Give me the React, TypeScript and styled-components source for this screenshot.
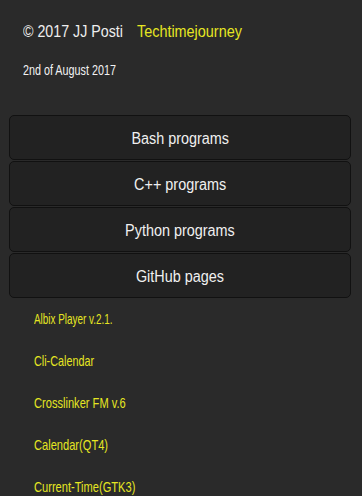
import React from "react";
import styled, { createGlobalStyle } from "styled-components";

const GlobalStyle = createGlobalStyle`
  html, body {
    margin: 0;
    padding: 0;
    background: #2a2a2a;
  }
  body {
    font-family: "Liberation Sans", Arial, sans-serif;
    color: #eeeeee;
  }
`;

const Page = styled.div`
  width: 362px;
  min-height: 496px;
  overflow: hidden;
`;

// the reference font is a narrow one; squeeze Liberation Sans to its width
const Squeeze = styled.span<{ $sx: number; $origin?: string }>`
  display: inline-block;
  white-space: nowrap;
  transform: scaleX(${(p) => p.$sx});
  transform-origin: ${(p) => p.$origin || "left"} center;
`;

const Header = styled.header`
  height: 115px;
  padding: 22px 0 0 23px;
  box-sizing: border-box;
`;

const TitleRow = styled.div`
  display: flex;
  align-items: baseline;
  gap: 2px;
  font-size: 16px;
  line-height: 20px;
`;

const Copyright = styled.span`
  color: #eeeeee;
`;

const SiteName = styled.a`
  color: #e6e622;
  text-decoration: none;
`;

const DateLine = styled.p`
  margin: 20px 0 0;
  font-size: 14px;
  line-height: 16px;
  color: #f2f2f2;
`;

const Menu = styled.nav`
  display: flex;
  flex-direction: column;
  gap: 1px;
  margin: 0 11px 0 9px;
`;

const MenuButton = styled.button`
  height: 45px;
  padding: 3px 0 0;
  background: #222222;
  border: 1px solid #111111;
  border-radius: 5px;
  color: #f0f0f0;
  font-family: inherit;
  font-size: 16px;
  cursor: pointer;
`;

const LinkList = styled.ul`
  list-style: none;
  margin: 0;
  padding: 13px 0 0 34px;
  display: flex;
  flex-direction: column;
  gap: 26px;
`;

const ProgramLink = styled.a`
  display: block;
  color: #e6e622;
  font-size: 15px;
  line-height: 16px;
  text-decoration: none;
`;

const sections = ["Bash programs", "C++ programs", "Python programs", "GitHub pages"];

const programs = [
  { name: "Albix Player v.2.1.", sx: 0.66 },
  { name: "Cli-Calendar", sx: 0.72 },
  { name: "Crosslinker FM v.6", sx: 0.74 },
  { name: "Calendar(QT4)", sx: 0.74 },
  { name: "Current-Time(GTK3)", sx: 0.74 },
];

export default function App() {
  return (
    <Page>
      <GlobalStyle />
      <Header>
        <TitleRow>
          <Copyright>
            <Squeeze $sx={0.89}>© 2017 JJ Posti</Squeeze>
          </Copyright>
          <SiteName href="#">
            <Squeeze $sx={0.9}>Techtimejourney</Squeeze>
          </SiteName>
        </TitleRow>
        <DateLine>
          <Squeeze $sx={0.77}>2nd of August 2017</Squeeze>
        </DateLine>
      </Header>
      <Menu>
        {sections.map((s) => (
          <MenuButton key={s}>
            <Squeeze $sx={0.9} $origin="center">
              {s}
            </Squeeze>
          </MenuButton>
        ))}
      </Menu>
      <LinkList>
        {programs.map((p) => (
          <li key={p.name}>
            <ProgramLink href="#">
              <Squeeze $sx={p.sx}>{p.name}</Squeeze>
            </ProgramLink>
          </li>
        ))}
      </LinkList>
    </Page>
  );
}
